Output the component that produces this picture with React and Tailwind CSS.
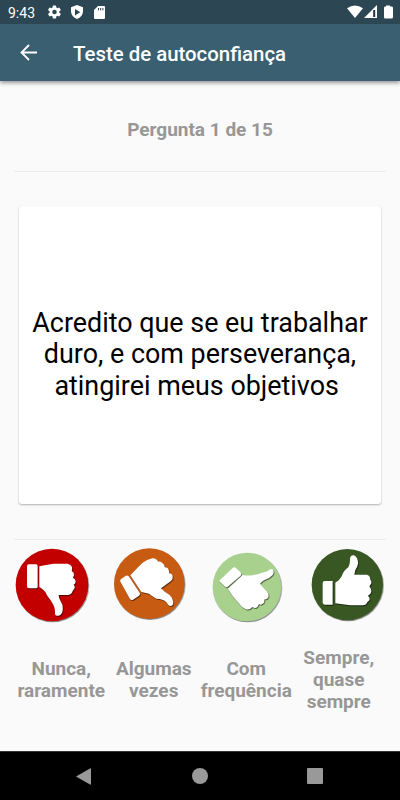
import React from "react";

const answers = [
  {
    label: ["Nunca,", "raramente"],
    color: "#c30000",
    cx: 156,
    cy: 150,
    r: 109,
    cuff: "M87 88H108Q113 88 113 94V155Q113 160 107 160H87Q81 160 81 154V94Q81 88 87 88Z",
    hand: "M118 94L160 86H203Q213 88 216 96Q217 103 215 108Q223 112 222 121L219 128Q228 133 227 140Q227 146 221 149Q227 156 222 163Q217 169 216 173Q212 179 205 180H176Q176 191 182 199Q190 211 188 225Q187 239 176 242Q167 244 165 238Q166 219 160 209L151 194Q142 185 136 171Q129 162 118 156Z",
  },
  {
    label: ["Algumas", "vezes"],
    color: "#c75b12",
    cx: 148,
    cy: 146,
    r: 106,
    cuff: "M64 131L78 122Q84 120 88 126L119 173Q122 178 117 182L99 194Q94 197 90 192L62 142Q58 135 64 131Z",
    hand: "M91 121L126 85Q141 73 157 70Q168 69 175 80Q181 77 188 85Q195 89 194 97Q204 97 206 105Q209 113 207 115Q218 116 218 125Q219 134 213 138L183 160Q195 173 209 180Q219 189 220 201Q220 213 211 213Q206 213 199 202Q190 191 169 191Q157 184 147 176L124 171Z",
  },
  {
    label: ["Com", "frequência"],
    color: "#a9d18e",
    cx: 141,
    cy: 156,
    r: 103,
    cuff: "M60 135L98 99Q103 95 108 99L122 112Q126 117 122 122L83 155Q78 159 74 154L60 140Q57 138 60 135Z",
    hand: "M84 161L128 120Q144 124 164 119Q174 119 184 114L202 109Q214 99 219 104Q223 112 218 120Q208 131 194 135Q188 137 180 146L202 171Q207 177 205 187Q202 194 193 193Q194 203 187 207Q182 211 177 207Q174 216 167 219Q161 219 157 216Q147 227 136 222Q125 217 116 204Q99 186 84 161Z",
  },
  {
    label: ["Sempre,", "quase", "sempre"],
    color: "#385723",
    cx: 142,
    cy: 149,
    r: 107,
    cuff: "M74 138H98V209H74Q68 209 68 202V144Q68 138 74 138Z",
    hand: "M106 143Q119 137 125 124Q131 106 145 97Q151 85 150 70Q152 59 162 61Q175 68 174 86Q172 97 166 105L163 119H201Q211 122 211 134Q216 139 213 147Q208 152 209 156Q217 165 212 175Q208 181 204 182Q211 190 208 196Q205 200 202 201Q199 211 188 211H150L106 205Z",
  },
];

const Thumb = ({ answer }) => (
  <svg width="100" height="95" viewBox="0 15 300 285" role="img" aria-label={answer.label.join(" ")}>
    <g className="drop-shadow-[2px_3px_2px_rgba(0,0,0,0.45)]">
      <circle cx={answer.cx} cy={answer.cy} r={answer.r} fill={answer.color} />
    </g>
    <g fill="white" className="drop-shadow-[2px_3px_1.5px_rgba(0,0,0,0.55)]">
      <path d={answer.cuff} />
      <path d={answer.hand} />
    </g>
  </svg>
);

const StatusBar = () => (
  <div className="flex h-6 items-center bg-[#2c4653] pl-2 text-white">
    <span className="w-10 pt-px text-[14px] leading-6">9:43</span>
    <svg width="13" height="14" viewBox="2 2 20 20" fill="currentColor">
      <path d="M19.4 13a7.5 7.5 0 0 0 0-2l2.1-1.6a.5.5 0 0 0 .1-.7l-2-3.4a.5.5 0 0 0-.6-.2l-2.5 1a7.3 7.3 0 0 0-1.7-1l-.4-2.6a.5.5 0 0 0-.5-.5h-4a.5.5 0 0 0-.5.5L9 5.100a8 8 0 0 0-1.700 1l-2.500-1a.5.5 0 0 0-.6.2l-2 3.400a.5.5 0 0 0 .1.7L4.500 11a7.500 7.500 0 0 0 0 2l-2.200 1.600a.5.5 0 0 0-.1.7l2 3.400c.1.2.4.3.6.2l2.500-1a7.300 7.300 0 0 0 1.700 1l.4 2.600c0 .3.2.5.5.5h4c.3 0 .5-.2.5-.5l.4-2.600a8 8 0 0 0 1.700-1l2.500 1c.2.1.5 0 .6-.2l2-3.400a.5.5 0 0 0-.1-.7ZM12 15.500a3.500 3.500 0 1 1 0-7 3.500 3.500 0 0 1 0 7Z" />
    </svg>
    <svg className="ml-[10px]" width="12" height="14" viewBox="0 0 12 14">
      <path d="M6 0L12 2.300V6.500Q11.500 12 6 14Q.5 12 0 6.500V2.300Z" fill="currentColor" />
      <path d="M4 4L9.200 7.200L4 10.400Z" fill="#2c4653" />
    </svg>
    <svg className="ml-[11px]" width="11" height="13" viewBox="0 0 11 13">
      <path d="M4 0H10Q11 0 11 1V12Q11 13 10 13H1Q0 13 0 12V4Z" fill="currentColor" />
      <path d="M4.500 2V4.300M6.700 2V4.300M8.900 2V4.300" stroke="#2c4653" />
    </svg>
    <svg className="mr-[7px] ml-auto" width="46" height="14" viewBox="0 0 46 14">
      <path d="M0 3.200Q8 -2.200 16 3.200L8 13Z" fill="currentColor" />
      <path d="M17 13L30 0V13Z" fill="currentColor" />
      <path d="M27.200 5V12" stroke="#1d3048" strokeWidth="2" />
      <path d="M39 .5H43V1.500H45Q46 1.500 46 3V12Q46 13.500 44.500 13.500H38Q37 13.500 37 12V3Q37 1.500 38 1.500H39Z" fill="currentColor" />
    </svg>
  </div>
);

const App = () => {
  return (
    <div className="flex h-[800px] w-[400px] flex-col overflow-hidden bg-[#fafafa] font-['Roboto',sans-serif]">
      <header className="z-10 text-white shadow-[0_2px_4px_rgba(0,0,0,0.4)]">
        <StatusBar />
        <div className="flex h-[57px] items-center bg-[#3a5f70] pl-5">
          <svg width="17" height="17" viewBox="0 0 17 17" fill="none" stroke="currentColor" strokeWidth="1.8">
            <path d="M17 8.500H2M9 1L1.500 8.500L9 16" />
          </svg>
          <h1 className="ml-9 pt-1 text-[20.4px] font-medium">Teste de autoconfiança</h1>
        </div>
      </header>

      <main className="flex h-[670px] flex-col">
        <div className="mx-[14px] flex h-[91px] items-center justify-center border-b border-[#ebebeb] pt-2">
          <p className="text-[19px] font-bold text-[#979797]">Pergunta 1 de 15</p>
        </div>

        <div className="mx-[19px] mt-[34px] flex h-[298px] items-center justify-center rounded-[3px] bg-white text-center shadow-[0_1px_2px_rgba(0,0,0,0.3)]">
          <p className="text-[26.9px] leading-[31.5px] whitespace-nowrap text-black">
            Acredito que se eu trabalhar
            <br />
            duro, e com perseverança,
            <br />
            atingirei meus objetivos&nbsp;
          </p>
        </div>

        <div className="mx-[14px] mt-[35px] border-t border-[#ebebeb]" />
        <div className="flex h-[95px]">
          {answers.map((answer) => (
            <Thumb key={answer.color} answer={answer} />
          ))}
        </div>
        <div className="mx-[15px] mt-3 grid h-[66px] grid-cols-4 items-center text-center text-[19px] leading-[22px] font-bold text-[#979797]">
          {answers.map((answer) => (
            <div key={answer.color} className="flex flex-col items-center">
              {answer.label.map((line) => (
                <span key={line}>{line}</span>
              ))}
            </div>
          ))}
        </div>
      </main>

      <nav className="flex h-[49px] items-center border-t border-[#333] bg-black pl-[76px] text-[#999]">
        <svg width="15" height="17" viewBox="0 0 15 17" fill="currentColor">
          <path d="M0 8.500L14 .5Q15 0 15 1V16Q15 17 14 16.500Z" />
        </svg>
        <span className="ml-[101px] size-[15.5px] rounded-full bg-[#999]" />
        <span className="ml-[99px] size-4 rounded-[1px] bg-[#999]" />
      </nav>
    </div>
  );
};

export default App;
